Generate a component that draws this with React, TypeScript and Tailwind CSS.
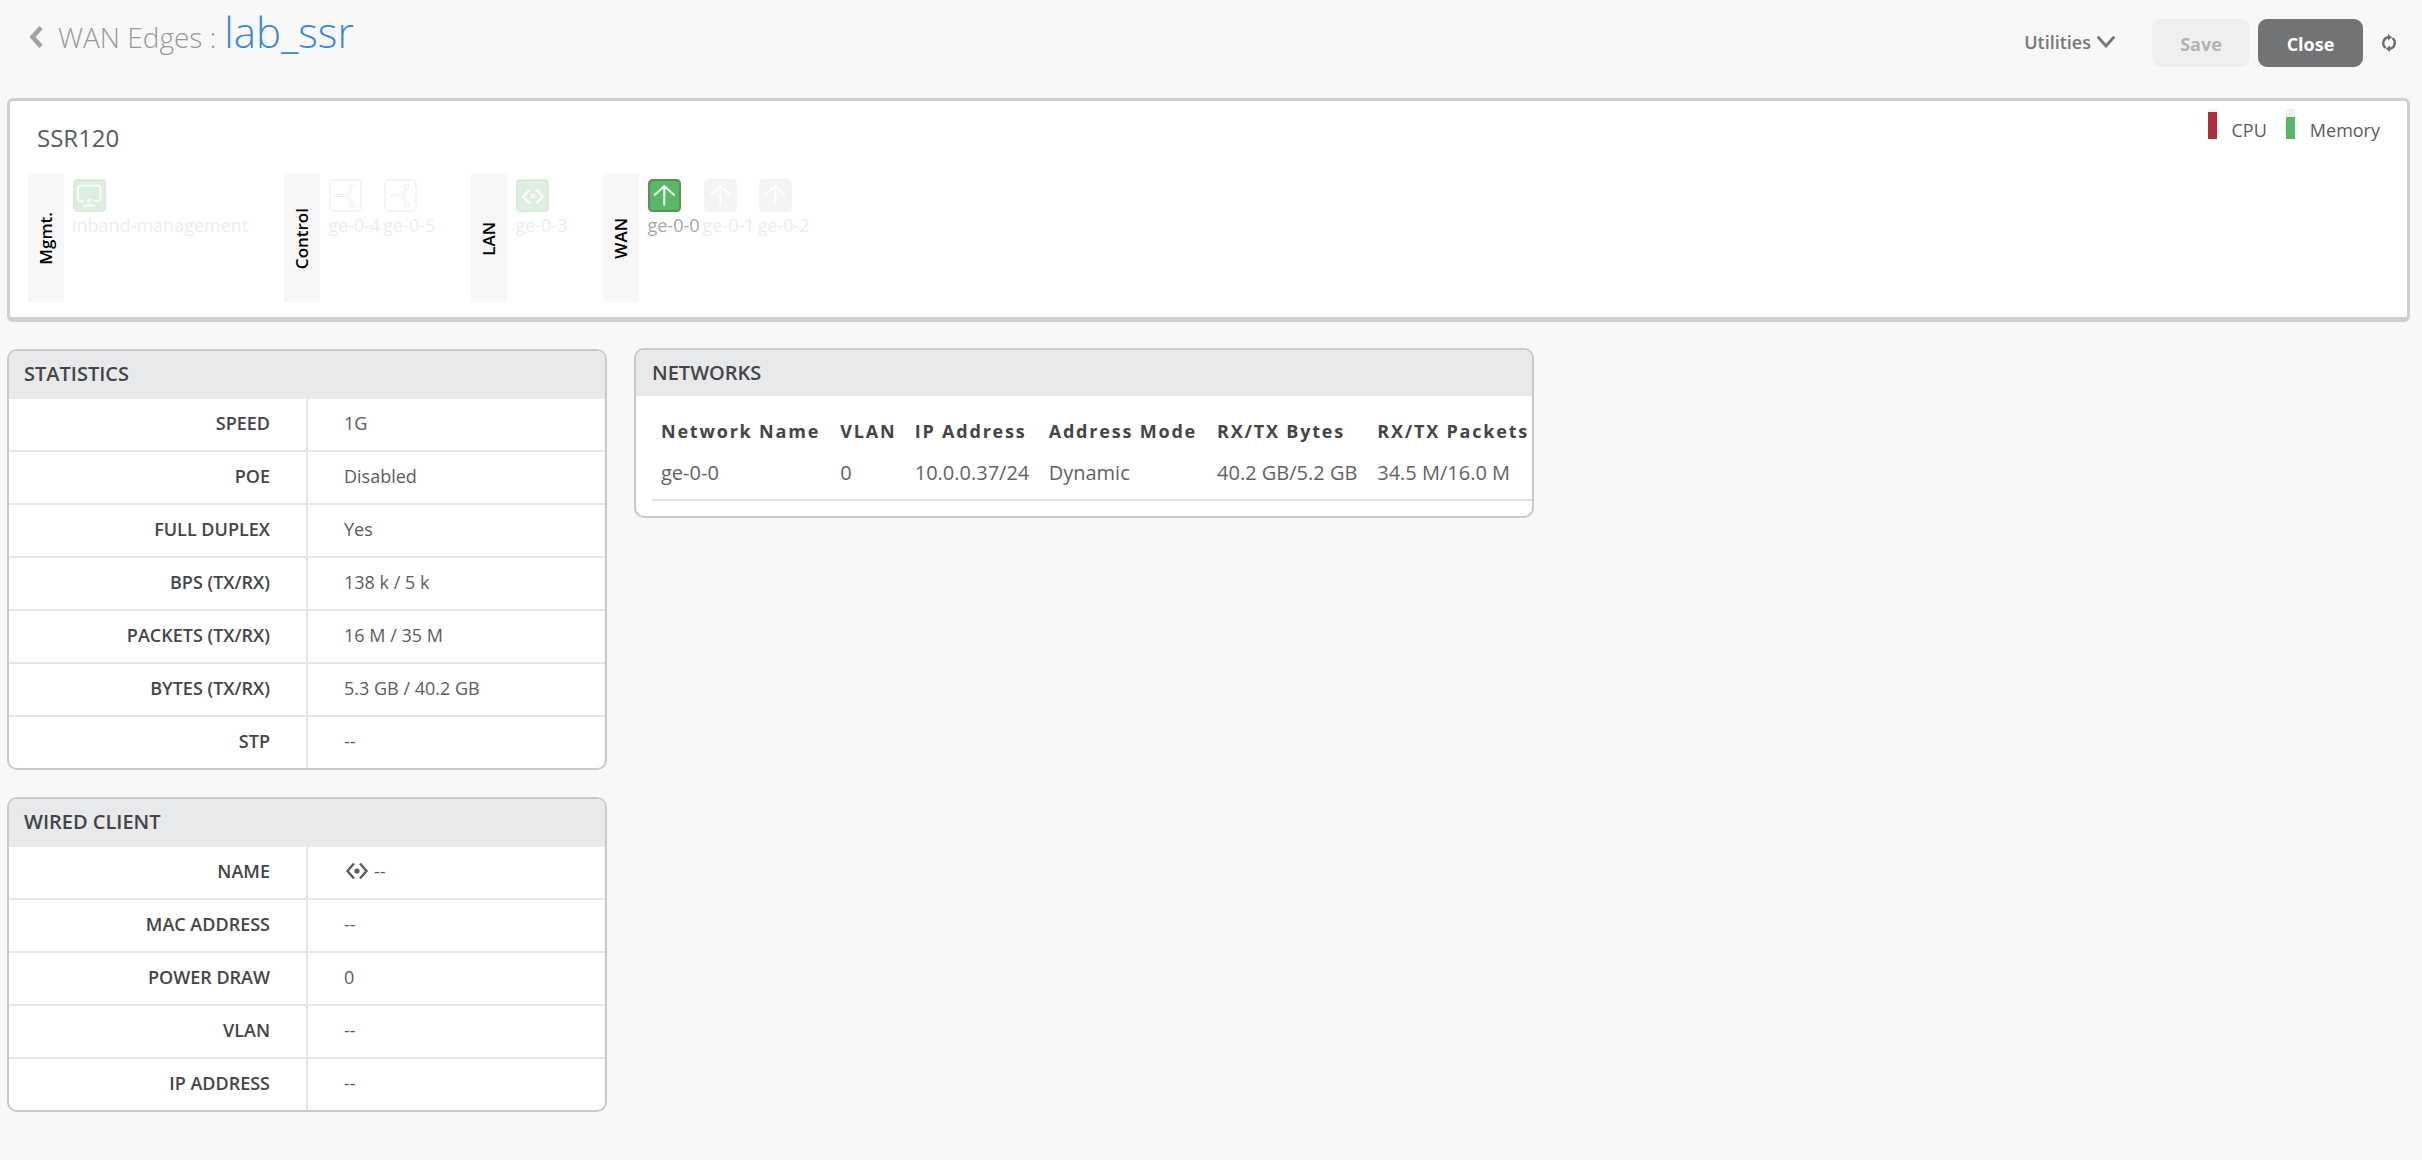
import type { ReactNode } from "react";

type IconKind = "monitor" | "branch" | "lan" | "up";

type Port = { name: string; icon: IconKind; on: boolean; active?: boolean };

const groups: { label: string; ports: Port[] }[] = [
  { label: "Mgmt.", ports: [{ name: "inband-management", icon: "monitor", on: true }] },
  {
    label: "Control",
    ports: [
      { name: "ge-0-4", icon: "branch", on: false },
      { name: "ge-0-5", icon: "branch", on: false },
    ],
  },
  { label: "LAN", ports: [{ name: "ge-0-3", icon: "lan", on: true }] },
  {
    label: "WAN",
    ports: [
      { name: "ge-0-0", icon: "up", on: true, active: true },
      { name: "ge-0-1", icon: "up", on: false },
      { name: "ge-0-2", icon: "up", on: false },
    ],
  },
];

function LanGlyph({ className }: { className: string }) {
  return (
    <svg viewBox="0 0 24 18" className={className} fill="none" stroke="currentColor" strokeWidth="2.4" aria-hidden="true">
      <path d="M9 1.500 2.500 9 9 16.500M15 1.500 21.500 9 15 16.500" />
      <circle cx="12" cy="9" r="2.600" fill="currentColor" stroke="none" />
    </svg>
  );
}

function PortIcon({ icon, on }: { icon: IconKind; on: boolean }) {
  if (icon === "branch") {
    return (
      <svg viewBox="0 0 33 33" className="size-[33px]" fill="none" aria-hidden="true">
        <rect x="1" y="1" width="31" height="31" rx="4" stroke="#cdcdcd" strokeWidth="2" />
        <g stroke="#a8a8a8" strokeWidth="3" strokeLinecap="round">
          <path d="M7.500 16.500h8M15.500 16.500c3.500-1.500 5.500-3.500 6.500-7M15.500 16.500c3.500 1.500 5.500 3.500 6.500 7" />
        </g>
        <g stroke="#fff" strokeWidth="1.400" strokeLinecap="round">
          <path d="M7.500 16.500h8M15.500 16.500c3.500-1.500 5.500-3.500 6.500-7M15.500 16.500c3.500 1.500 5.500 3.500 6.500 7" />
        </g>
        <circle cx="23" cy="7.200" r="2.400" fill="#fff" stroke="#a8a8a8" />
        <circle cx="23" cy="26" r="2.400" fill="#fff" stroke="#a8a8a8" />
      </svg>
    );
  }
  return (
    <svg viewBox="0 0 33 33" className="size-[33px]" fill="none" aria-hidden="true">
      <rect x="1" y="1" width="31" height="31" rx="3.500" fill={on ? "#57b967" : "#cdcdcd"} stroke={on ? "#5a9351" : "#cdcdcd"} strokeWidth="2" />
      {icon === "monitor" && (
        <g stroke="#fff" strokeWidth="1.700" strokeLinecap="round">
          <path d="M11 22H8a3 3 0 0 1-3-3V9.500a3 3 0 0 1 3-3h16.500a3 3 0 0 1 3 3V19a3 3 0 0 1-3 3H21.500M10.500 26.500h11" />
          <circle cx="16" cy="22" r="2" fill="#fff" stroke="none" />
        </g>
      )}
      {icon === "lan" && (
        <g stroke="#fff" strokeWidth="2.200">
          <path d="M13.500 11 7 17.500l6.500 6.500M20.500 11l6.500 6.500-6.500 6.500" />
          <circle cx="17" cy="17" r="2.300" fill="#fff" stroke="none" />
        </g>
      )}
      {icon === "up" && <path d="M16.300 26.500V7M6 16.500 16.300 7l10.300 9.500" stroke="#fff" strokeWidth="2" />}
    </svg>
  );
}

function Meter({ label, level, color }: { label: string; level: number; color: string }) {
  return (
    <div className="flex items-start">
      <div className="flex h-[30px] w-[9px] flex-col justify-end bg-[#efefef]">
        <div className={color} style={{ height: `${level}%` }} />
      </div>
      <span className="ml-[15px] pt-[9px] text-[18px] leading-6 text-[#5a5c5f]">{label}</span>
    </div>
  );
}

function DetailCard({ title, rows }: { title: string; rows: [string, ReactNode][] }) {
  return (
    <section className="overflow-hidden rounded-[10px] border-2 border-[#c8c9cb] bg-white">
      <h2 className="h-12 bg-[#e8e9eb] px-[15px] text-[20px] leading-[46px] font-semibold text-[#444547]">{title}</h2>
      <table className="w-full table-fixed border-collapse">
        <tbody>
          {rows.map(([label, value]) => (
            <tr key={label} className="h-[53px] border-b-2 border-[#e6e6e7] first:h-[52px] last:h-[52px] last:border-b-0">
              <th scope="row" className="w-1/2 border-r-2 border-[#e6e6e7] pr-9 pb-1 text-right text-[18px] leading-6 font-semibold text-[#444547]">
                {label}
              </th>
              <td className="pb-1 pl-9 text-[18px] leading-6 text-[#5a5c5f]">{value}</td>
            </tr>
          ))}
        </tbody>
      </table>
    </section>
  );
}

const networkColumns = ["Network Name", "VLAN", "IP Address", "Address Mode", "RX/TX Bytes", "RX/TX Packets"];
const networkRow = ["ge-0-0", "0", "10.0.0.37/24", "Dynamic", "40.2 GB/5.2 GB", "34.5 M/16.0 M"];

export default function App() {
  return (
    <div className="min-h-screen bg-[#f8f8f8] pr-3 pb-12 pl-[7px] font-['Open_Sans',sans-serif]">
      <header className="flex h-[98px] items-start justify-between">
        <div className="flex items-baseline pl-[22px]">
          <button type="button" aria-label="Back" className="text-[#a2a2a2]">
            <svg viewBox="0 0 14 22" className="h-[22px] w-[14px]" fill="none" stroke="currentColor" strokeWidth="4.500" aria-hidden="true">
              <path d="M12 1.500 3.500 11l8.500 9.500" />
            </svg>
          </button>
          <a href="#wan-edges" className="ml-[15px] text-[28px] font-light text-[#999]">WAN Edges :</a>
          <h1 className="ml-2 text-[42px] leading-[64px] font-light text-[#3a87dd]">lab_ssr</h1>
        </div>
        <div className="flex items-center pt-[19px] pr-[13px]">
          <button type="button" className="mr-[37px] flex items-center gap-[6px] pb-[3px] text-[18px] leading-6 font-semibold text-[#76777a]">
            Utilities
            <svg viewBox="0 0 18 12" className="h-3 w-[18px]" fill="none" stroke="currentColor" strokeWidth="2.800" strokeLinecap="round" aria-hidden="true">
              <path d="m1.500 1.500 7.500 8.500 7.500-8.500" />
            </svg>
          </button>
          <button type="button" disabled className="mr-2 h-12 w-[98px] rounded-[9px] bg-[#efefef] pt-[3px] text-[18px] font-bold text-[#b3b3b3]">
            Save
          </button>
          <button type="button" className="h-12 w-[105px] rounded-[9px] bg-[#727375] pt-[3px] text-[18px] font-bold text-white">
            Close
          </button>
          <button type="button" aria-label="Refresh" className="ml-[18px] text-[#6c6d6f]">
            <svg viewBox="0 0 16 18" className="h-[18px] w-4" fill="none" stroke="currentColor" strokeWidth="2.400" aria-hidden="true">
              <path d="M4.600 13.900A6 6 0 0 1 7.500 3.200M11.400 4.100A6 6 0 0 1 8.500 14.800" />
              <path d="M7 0v6.400l4.200-3.200zM9 18v-6.400l-4.200 3.200z" fill="currentColor" stroke="none" />
            </svg>
          </button>
        </div>
      </header>

      <main>
        <section className="rounded-md border-3 border-b-5 border-[#cfcfcf] bg-white px-[18px] pb-[15px]">
          <div className="flex h-[72px] items-start justify-between">
            <h2 className="pt-[21px] pl-[9px] text-[24px] leading-8 text-[#5a5c5f]">SSR120</h2>
            <div className="flex gap-[19px] pt-2 pr-[9px]">
              <Meter label="CPU" level={90} color="bg-[#b22c39]" />
              <Meter label="Memory" level={74} color="bg-[#57b967]" />
            </div>
          </div>
          <div className="flex gap-9">
            {groups.map((group) => (
              <div key={group.label} className="flex h-[129px]">
                <div className="flex w-9 items-center justify-center bg-[#f7f7f7] pt-[2px]">
                  <span className="rotate-180 text-[17px] leading-6 font-semibold text-black [writing-mode:vertical-rl]">{group.label}</span>
                </div>
                <div className="flex gap-[3px] pt-[6px] pl-2">
                  {group.ports.map((port) => (
                    <button
                      type="button"
                      key={port.name}
                      className={port.active ? "flex flex-col items-start" : "flex flex-col items-start opacity-20"}
                    >
                      <span className="ml-px">
                        <PortIcon icon={port.icon} on={port.on} />
                      </span>
                      <span className="pt-px text-[18px] leading-6 font-medium text-[#a6a6a6]">{port.name}</span>
                    </button>
                  ))}
                </div>
              </div>
            ))}
          </div>
        </section>

        <div className="mt-[26px] flex items-start gap-[27px]">
          <div className="mt-px flex w-[600px] flex-col gap-[27px]">
            <DetailCard
              title="STATISTICS"
              rows={[
                ["SPEED", "1G"],
                ["POE", "Disabled"],
                ["FULL DUPLEX", "Yes"],
                ["BPS (TX/RX)", "138 k / 5 k"],
                ["PACKETS (TX/RX)", "16 M / 35 M"],
                ["BYTES (TX/RX)", "5.3 GB / 40.2 GB"],
                ["STP", "--"],
              ]}
            />
            <DetailCard
              title="WIRED CLIENT"
              rows={[
                [
                  "NAME",
                  <span className="flex items-center gap-[5px]">
                    <LanGlyph className="ml-px h-[18px] w-6" />
                    --
                  </span>,
                ],
                ["MAC ADDRESS", "--"],
                ["POWER DRAW", "0"],
                ["VLAN", "--"],
                ["IP ADDRESS", "--"],
              ]}
            />
          </div>

          <section className="w-[900px] overflow-hidden rounded-[10px] border-2 border-[#c8c9cb] bg-white">
            <h2 className="h-[46px] bg-[#e8e9eb] px-4 text-[20px] leading-[46px] font-semibold text-[#444547]">NETWORKS</h2>
            <div className="pt-3 pb-[15px] pl-4">
              <table className="w-full border-collapse text-left whitespace-nowrap">
                <thead>
                  <tr className="h-[46px]">
                    {networkColumns.map((column) => (
                      <th key={column} scope="col" className="pr-2 pl-[9px] text-[18px] leading-6 font-bold tracking-widest text-[#444547] last:pr-0">
                        {column}
                      </th>
                    ))}
                  </tr>
                </thead>
                <tbody>
                  <tr className="h-[46px] border-b-2 border-[#e2e2e2]">
                    {networkRow.map((value, index) => (
                      <td key={networkColumns[index]} className="pr-2 pb-2 pl-[9px] text-[20px] leading-7 text-[#626364]">
                        {value}
                      </td>
                    ))}
                  </tr>
                </tbody>
              </table>
            </div>
          </section>
        </div>
      </main>
    </div>
  );
}
